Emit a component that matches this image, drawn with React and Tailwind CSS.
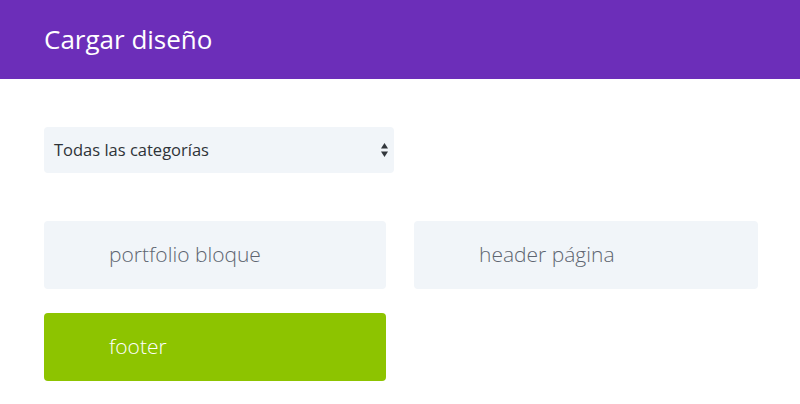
export default function App() {
  const font = { fontFamily: '"Open Sans", sans-serif' };
  return (
    <div className="w-[800px] h-[404px] bg-white overflow-hidden" style={font}>
      <div className="h-[79px] bg-[#6c2eb9] flex items-center px-[44px]">
        <h1 className="text-white text-[26px] font-normal leading-none -mt-[2px]">Cargar diseño</h1>
      </div>
      <div className="px-[44px] pt-[48px]">
        <div className="w-[350px] h-[46px] bg-[#f1f5f9] rounded-[4px] flex items-center justify-between pl-[10px] pr-[6px]">
          <span className="text-[#2e3338] text-[16.5px]">Todas las categorías</span>
          <svg width="7" height="16" viewBox="0 0 7 16">
            <polygon points="3.5,1 7,6.5 0,6.5" fill="#32373c" />
            <polygon points="0,9.5 7,9.5 3.5,15" fill="#32373c" />
          </svg>
        </div>
        <div className="mt-[48px] grid grid-cols-[342px_344px] gap-x-[28px] gap-y-[24px]">
          <div className="h-[68px] bg-[#f1f5f9] rounded-[4px] flex items-center pl-[65px]">
            <span className="text-[#5e6570] text-[21px] font-light">portfolio bloque</span>
          </div>
          <div className="h-[68px] bg-[#f1f5f9] rounded-[4px] flex items-center pl-[65px]">
            <span className="text-[#5e6570] text-[21px] font-light">header página</span>
          </div>
          <div className="h-[68px] bg-[#8dc400] rounded-[4px] flex items-center pl-[65px]">
            <span className="text-white text-[21px] font-light">footer</span>
          </div>
        </div>
      </div>
    </div>
  );
}
